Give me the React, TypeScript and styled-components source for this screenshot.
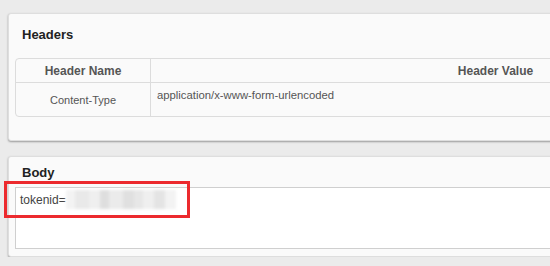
import React from "react"
import styled, { createGlobalStyle } from "styled-components"

const Global = createGlobalStyle`
  html, body {
    margin: 0;
    padding: 0;
    background: #ebebeb;
    overflow: hidden;
  }
  body {
    font-family: "Liberation Sans", Arial, sans-serif;
    color: #333;
  }
`

const Page = styled.div`
  width: 900px;
  padding: 13px 0 0 8px;
  display: flex;
  flex-direction: column;
  gap: 15px;
`

const Panel = styled.section<{ bottom: number }>`
  background: #fafafa;
  border: 1px solid #dedede;
  border-radius: 3px;
  box-shadow: 0 1px 2px rgba(0, 0, 0, 0.35);
  padding: 0 6px ${props => props.bottom}px;
`

const Title = styled.h3<{ top: number; gap: number }>`
  margin: 0 0 ${props => props.gap}px;
  padding: ${props => props.top}px 0 0 7px;
  font-size: 13px;
  line-height: 16px;
  font-weight: bold;
  color: #222;
`

const Table = styled.table`
  width: 826px;
  border-collapse: separate;
  border-spacing: 0;
  border: 1px solid #dcdcdc;
  border-radius: 4px;
  font-size: 11px;
  color: #555;
`

const Row = styled.tr<{ h: number }>`
  height: ${props => props.h}px;
`

const Th = styled.th<{ w?: number }>`
  width: ${props => (props.w ? `${props.w}px` : "auto")};
  padding: 0;
  font-size: 12px;
  color: #555;
  text-align: center;
  border-bottom: 1px solid #dcdcdc;
  & + & {
    border-left: 1px solid #dcdcdc;
  }
`

const Td = styled.td<{ top?: boolean }>`
  padding: ${props => (props.top ? "6px 6px 0" : "0")};
  text-align: ${props => (props.top ? "left" : "center")};
  vertical-align: ${props => (props.top ? "top" : "middle")};
  font-size: ${props => (props.top ? "11.3px" : "11px")};
  & + & {
    border-left: 1px solid #dcdcdc;
  }
`

const Field = styled.div`
  position: relative;
  height: 56px;
  background: #fff;
  border: 1px solid #cfcfcf;
  padding: 4px 4px 0;
  font-size: 12px;
  line-height: 16px;
  color: #444;
  display: flex;
  align-items: flex-start;
`

const Masked = styled.span`
  display: inline-flex;
  height: 19px;
  margin-top: -2px;
  filter: blur(1.5px);
`

const Pixel = styled.span<{ shade: string; w: number }>`
  width: ${props => props.w}px;
  background: ${props => props.shade};
`

const Highlight = styled.div`
  position: absolute;
  left: -12px;
  top: -7px;
  width: 180px;
  height: 31px;
  border: 3px solid #ec2a2e;
  pointer-events: none;
`

const mask: [string, number][] = [
  ["#f3f3f3", 9],
  ["#e9e9e9", 14],
  ["#efefef", 11],
  ["#dedede", 9],
  ["#ebebeb", 14],
  ["#e0e0e0", 11],
  ["#e7e7e7", 9],
  ["#efefef", 11],
  ["#e4e4e4", 11],
  ["#f3f3f3", 11],
]

export default function App() {
  return (
    <>
      <Global />
      <Page>
        <Panel bottom={23}>
          <Title top={13} gap={15}>
            Headers
          </Title>
          <Table>
            <thead>
              <Row h={24}>
                <Th w={134}>Header Name</Th>
                <Th>Header Value</Th>
              </Row>
            </thead>
            <tbody>
              <Row h={33}>
                <Td>Content-Type</Td>
                <Td top>application/x-www-form-urlencoded</Td>
              </Row>
            </tbody>
          </Table>
        </Panel>
        <Panel bottom={7}>
          <Title top={8} gap={6}>
            Body
          </Title>
          <Field>
            tokenid=
            <Masked>
              {mask.map(([shade, w], i) => (
                <Pixel key={i} shade={shade} w={w} />
              ))}
            </Masked>
            <Highlight />
          </Field>
        </Panel>
      </Page>
    </>
  )
}
